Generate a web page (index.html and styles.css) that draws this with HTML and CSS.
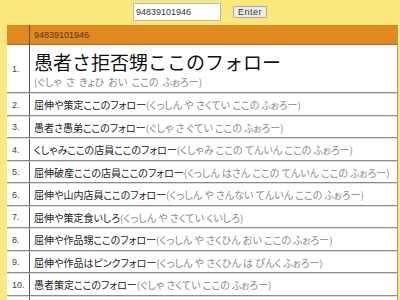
FILE: index.html
```html
<!DOCTYPE html>
<html lang="ja">
<head>
    <meta charset="UTF-8">
    <title>フォロー</title>
    <link rel="stylesheet" href="styles.css">
</head>
<body>
    <form class="search">
        <input type="text" class="search-input" value="94839101946">
        <button type="button" class="search-button">Enter</button>
    </form>

    <table class="results">
        <thead>
            <tr>
                <th class="num"></th>
                <th class="query">94839101946</th>
            </tr>
        </thead>
        <tbody>
            <tr class="top">
                <td class="num">1.</td>
                <td>
                    <div class="big">愚者さ拒否甥ここのフォロー</div>
                    <div class="reading">(ぐしゃ さ きょひ おい ここの ふぉろー)</div>
                </td>
            </tr>
            <tr>
                <td class="num">2.</td>
                <td>屈伸や策定ここのフォロー<span class="reading">(くっしん や さくてい ここの ふぉろー)</span></td>
            </tr>
            <tr>
                <td class="num">3.</td>
                <td>愚者さ愚弟ここのフォロー<span class="reading">(ぐしゃ さ ぐてい ここの ふぉろー)</span></td>
            </tr>
            <tr>
                <td class="num">4.</td>
                <td>くしゃみここの店員ここのフォロー<span class="reading">(くしゃみ ここの てんいん ここの ふぉろー)</span></td>
            </tr>
            <tr>
                <td class="num">5.</td>
                <td>屈伸破産ここの店員ここのフォロー<span class="reading">(くっしん はさん ここの てんいん ここの ふぉろー)</span></td>
            </tr>
            <tr>
                <td class="num">6.</td>
                <td>屈伸や山内店員ここのフォロー<span class="reading">(くっしん や さんない てんいん ここの ふぉろー)</span></td>
            </tr>
            <tr>
                <td class="num">7.</td>
                <td>屈伸や策定食いしろ<span class="reading">(くっしん や さくてい くいしろ)</span></td>
            </tr>
            <tr>
                <td class="num">8.</td>
                <td>屈伸や作品甥ここのフォロー<span class="reading">(くっしん や さくひん おい ここの ふぉろー)</span></td>
            </tr>
            <tr>
                <td class="num">9.</td>
                <td>屈伸や作品はピンクフォロー<span class="reading">(くっしん や さくひん は ぴんく ふぉろー)</span></td>
            </tr>
            <tr>
                <td class="num">10.</td>
                <td>愚者策定ここのフォロー<span class="reading">(ぐしゃ さくてい ここの ふぉろー)</span></td>
            </tr>
            <tr>
                <td class="num">11.</td>
                <td>屈伸や策定ここのフォロー<span class="reading">(くっしん や さくてい ここの ふぉろー)</span></td>
            </tr>
        </tbody>
    </table>
</body>
</html>
```

FILE: styles.css
```css
body {
    margin: 0;
    padding: 3px 2px 0 7px;
    background: #fbe87c;
    font-family: "Noto Sans CJK JP", "Liberation Sans", sans-serif;
    overflow: hidden;
}
.search {
    display: flex;
    justify-content: center;
    align-items: center;
    gap: 12px;
    height: 18px;
    margin: 0 0 4px -5px;
}
.search-input {
    width: 88px;
    height: 18px;
    box-sizing: border-box;
    padding: 0 2px;
    border: 1px solid #b8b8b8;
    background: white;
    font-family: "Liberation Sans", sans-serif;
    font-size: 9px;
    color: #333;
}
.search-button {
    width: 34px;
    height: 12px;
    padding: 0;
    border: 1px solid #a8a8a8;
    border-radius: 1px;
    background: #ececec;
    font-family: "Liberation Sans", sans-serif;
    font-size: 9px;
    line-height: 10px;
    color: #333;
    letter-spacing: 0.5px;
}
.results {
    width: 100%;
    table-layout: fixed;
    border-collapse: separate;
    border-spacing: 0;
    background: white;
    border-right: 1px solid #999;
}
.results th,
.results td {
    box-sizing: border-box;
}
.results th {
    height: 20px;
    padding: 0;
    background: #e0891f;
    border-bottom: 1px solid #b8661a;
    text-align: left;
    font-weight: normal;
}
.results th.query {
    padding-left: 4px;
    font-family: "Liberation Sans", sans-serif;
    font-size: 9px;
    color: #553311;
}
.results td {
    height: 22px;
    padding: 0 0 0 4px;
    border-bottom: 1px solid #8c8c8c;
    border-top: 1px solid #dcdcdc;
    font-size: 10px;
    font-feature-settings: "palt";
    color: #222;
    white-space: nowrap;
    overflow: hidden;
    vertical-align: middle;
}
.results tbody tr:nth-child(even) td {
    height: 23px;
}
.results .num {
    width: 23px;
    padding-left: 5px;
    border-right: 1px solid #555;
    font-family: "Liberation Sans", sans-serif;
    font-size: 9px;
    color: #444;
}
.results th.num {
    border-right: 1px solid #7a4a14;
}
.results tr.top td {
    height: 48px;
    border-top: none;
}
.big {
    font-size: 19px;
    font-feature-settings: "palt" 0;
    line-height: 23px;
    margin-top: 2px;
    color: #111;
}
.reading {
    color: #8a8a8a;
}
.top .reading {
    line-height: 17px;
    word-spacing: 2px;
}
```
